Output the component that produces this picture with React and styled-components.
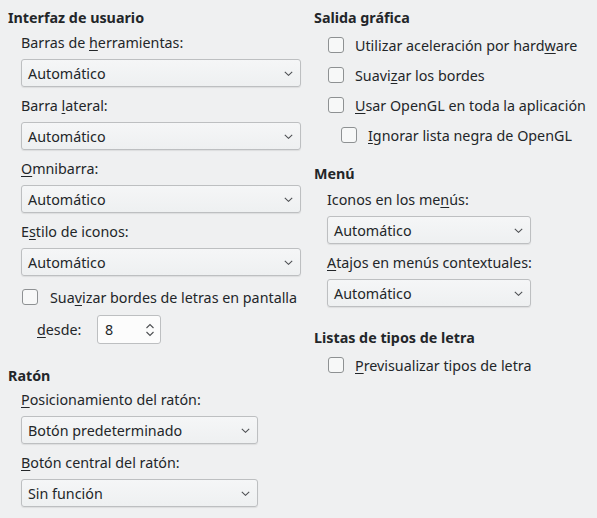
import React from 'react';
import styled, { createGlobalStyle } from 'styled-components';

const GlobalStyle = createGlobalStyle`
    body {
        margin: 0;
        background: #eff0f1;
        font-family: "Noto Sans", "Open Sans", sans-serif;
        font-size: 14.3px;
        color: #232629;
    }
`;

const Page = styled.div`
    display: flex;
    align-items: flex-start;
    padding: 8px 0 0 8px;
    width: 597px;
    height: 518px;
    box-sizing: border-box;
    overflow: hidden;
`;

const Column = styled.div`
    display: flex;
    flex-direction: column;
    flex-shrink: 0;
    width: ${(p) => p.width}px;
    margin-left: ${(p) => p.offset || 0}px;
`;

const Title = styled.div`
    font-weight: 700;
    height: 20px;
    line-height: 20px;
    margin-top: ${(p) => p.top || 0}px;
`;

const Body = styled.div`
    display: flex;
    flex-direction: column;
    padding-left: 13px;
    padding-top: ${(p) => p.top || 0}px;
`;

const Label = styled.div`
    height: 20px;
    line-height: 20px;
    margin-bottom: 6px;
    white-space: nowrap;
`;

const Key = styled.span`
    text-decoration: underline;
    text-underline-offset: 2px;
`;

const Combo = styled.div`
    display: flex;
    align-items: center;
    justify-content: space-between;
    box-sizing: border-box;
    width: ${(p) => p.width}px;
    height: 28px;
    margin-bottom: 9px;
    padding: 0 7px 0 6px;
    border: 1px solid #bdbfc1;
    border-radius: 3px;
    background: linear-gradient(#f5f6f7, #eef0f1);
    box-shadow: 0 1px 1px rgba(0, 0, 0, 0.08);
    white-space: nowrap;
`;

const Chevron = () => (
    <svg width="9" height="5" viewBox="0 0 9 5">
        <path d="M0.8 0.8l3.7 3.5 3.7-3.5" fill="none" stroke="#4d4f52" strokeWidth="1.1" />
    </svg>
);

const Select = ({ width, value }) => (
    <Combo width={width}>
        <span>{value}</span>
        <Chevron />
    </Combo>
);

const Field = ({ label, width, value }) => (
    <>
        <Label>{label}</Label>
        <Select width={width} value={value} />
    </>
);

const CheckRow = styled.div`
    display: flex;
    align-items: center;
    height: ${(p) => p.h || 30}px;
    padding-left: ${(p) => p.indent || 1}px;
    margin-top: ${(p) => p.top || 0}px;
    white-space: nowrap;
`;

const Box = styled.span`
    width: 16px;
    height: 16px;
    box-sizing: border-box;
    border: 1px solid #8e9193;
    border-radius: 3px;
    background: #f7f8f8;
    margin-right: ${(p) => p.gap || 11}px;
    flex-shrink: 0;
`;

const Check = ({ children, indent, gap, h, top }) => (
    <CheckRow indent={indent} h={h} top={top}>
        <Box gap={gap} />
        <span>{children}</span>
    </CheckRow>
);

const SpinRow = styled.div`
    display: flex;
    align-items: center;
    padding-left: 16px;
    margin-top: 7px;
    height: 29px;
`;

const SpinLabel = styled.span`
    width: 60px;
`;

const Spin = styled.div`
    display: flex;
    align-items: center;
    justify-content: space-between;
    box-sizing: border-box;
    width: 64px;
    height: 29px;
    padding: 0 5px 0 7px;
    border: 1px solid #bdbfc1;
    border-radius: 3px;
    background: #fcfcfc;
`;

const SpinArrows = () => (
    <svg width="10" height="16" viewBox="0 0 10 16">
        <path d="M1.5 6l3.5-3.5 3.5 3.5M1.5 10l3.5 3.5 3.5-3.5" fill="none" stroke="#4d4f52" strokeWidth="1.1" />
    </svg>
);

const App = () => (
    <>
        <GlobalStyle />
        <Page>
            <Column width={292}>
                <Title>Interfaz de usuario</Title>
                <Body top={5}>
                    <Field label={<>Barras de <Key>h</Key>erramientas:</>} width={280} value="Automático" />
                    <Field label={<>Barra <Key>l</Key>ateral:</>} width={280} value="Automático" />
                    <Field label={<><Key>O</Key>mnibarra:</>} width={280} value="Automático" />
                    <Field label={<>E<Key>s</Key>tilo de iconos:</>} width={280} value="Automático" />
                    <Check h={22} top={1} indent={1} gap={12}>Sua<Key>v</Key>izar bordes de letras en pantalla</Check>
                    <SpinRow>
                        <SpinLabel><Key>d</Key>esde:</SpinLabel>
                        <Spin>
                            <span>8</span>
                            <SpinArrows />
                        </Spin>
                    </SpinRow>
                </Body>
                <Title top={22}>Ratón</Title>
                <Body top={4}>
                    <Field label={<><Key>P</Key>osicionamiento del ratón:</>} width={237} value="Botón predeterminado" />
                    <Field label={<><Key>B</Key>otón central del ratón:</>} width={237} value="Sin función" />
                </Body>
            </Column>
            <Column width={280} offset={14}>
                <Title>Salida gráfica</Title>
                <Body top={2}>
                    <Check>Utilizar aceleración por hard<Key>w</Key>are</Check>
                    <Check>Suavi<Key>z</Key>ar los bordes</Check>
                    <Check><Key>U</Key>sar OpenGL en toda la aplicación</Check>
                    <Check indent={14}><Key>I</Key>gnorar lista negra de OpenGL</Check>
                </Body>
                <Title top={14}>Menú</Title>
                <Body top={6}>
                    <Field label={<>Iconos en los me<Key>n</Key>ús:</>} width={204} value="Automático" />
                    <Field label={<><Key>A</Key>tajos en menús contextuales:</>} width={204} value="Automático" />
                </Body>
                <Title top={12}>Listas de tipos de letra</Title>
                <Body top={2}>
                    <Check><Key>P</Key>revisualizar tipos de letra</Check>
                </Body>
            </Column>
        </Page>
    </>
);

export default App;
